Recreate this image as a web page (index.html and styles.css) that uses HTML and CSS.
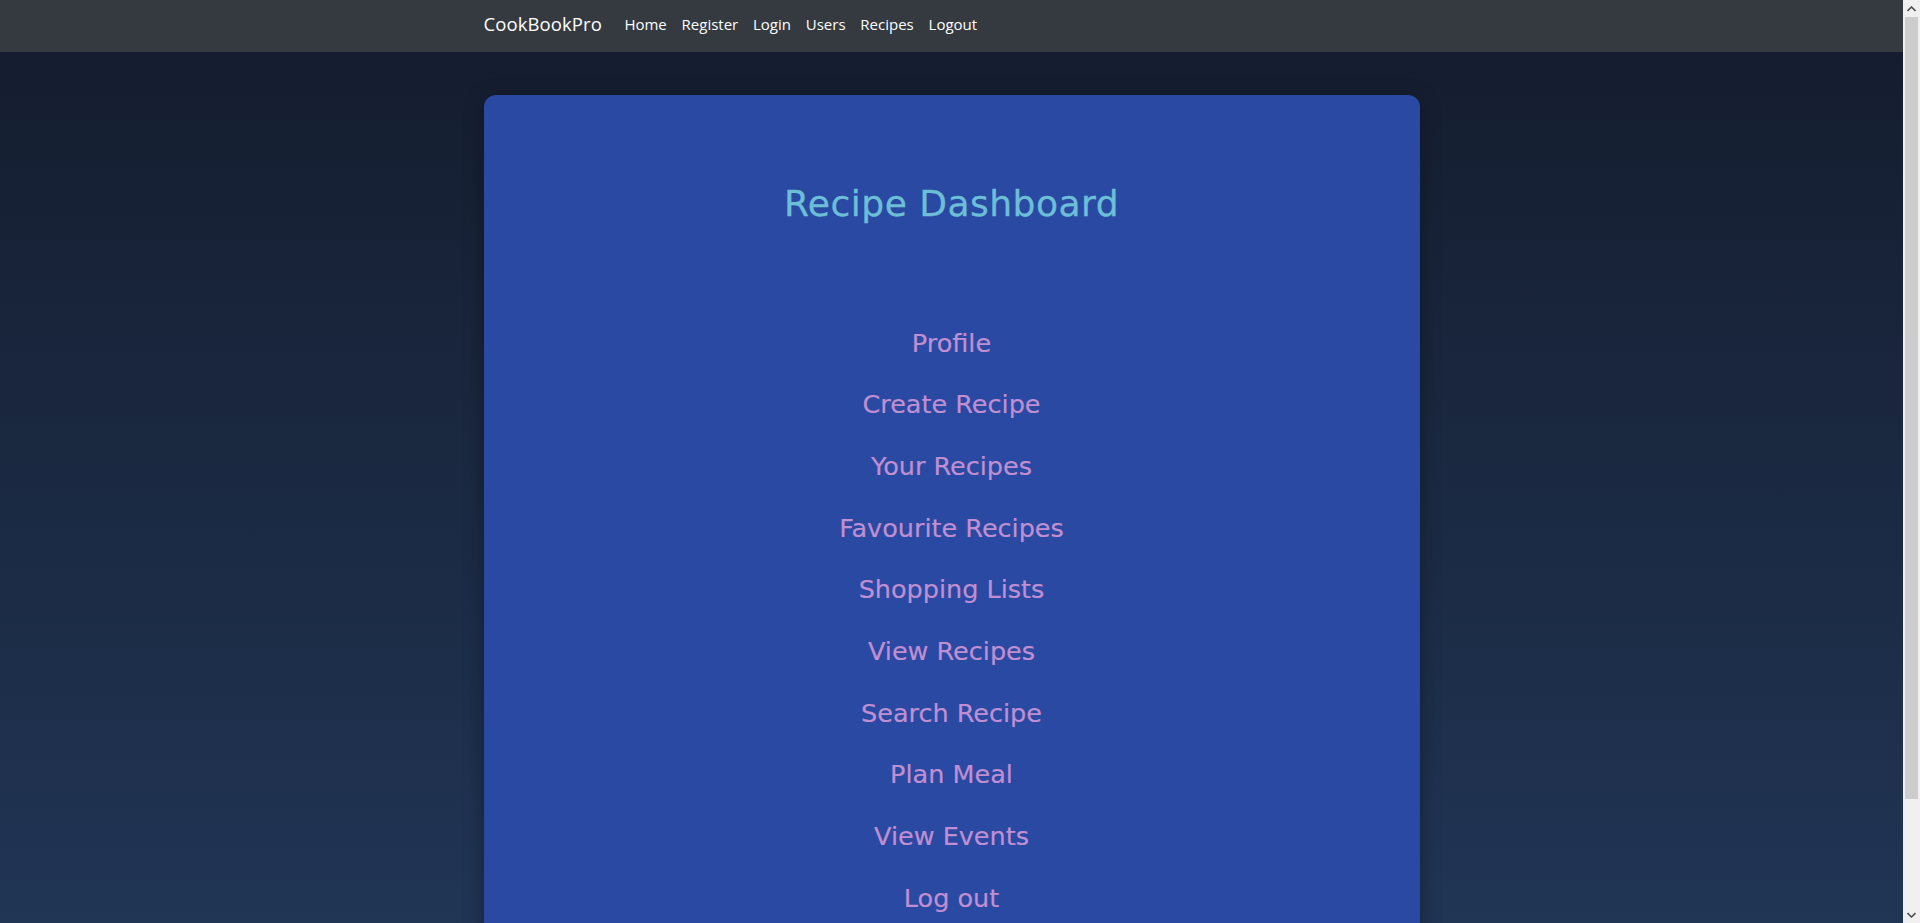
FILE: index.html
```html
<!DOCTYPE html>
<html lang="en">
<head>
<meta charset="utf-8">
<title>CookBookPro</title>
<link rel="stylesheet" href="styles.css">
</head>
<body>
<nav class="navbar">
  <div class="container nav-inner">
    <a class="brand" href="#">CookBookPro</a>
    <ul class="nav-links">
      <li><a href="#">Home</a></li>
      <li><a href="#">Register</a></li>
      <li><a href="#">Login</a></li>
      <li><a href="#">Users</a></li>
      <li><a href="#">Recipes</a></li>
      <li><a href="#">Logout</a></li>
    </ul>
  </div>
</nav>
<main class="container">
  <section class="card">
    <h1 class="title">Recipe Dashboard</h1>
    <ul class="menu">
      <li><a href="#">Profile</a></li>
      <li><a href="#">Create Recipe</a></li>
      <li><a href="#">Your Recipes</a></li>
      <li><a href="#">Favourite Recipes</a></li>
      <li><a href="#">Shopping Lists</a></li>
      <li><a href="#">View Recipes</a></li>
      <li><a href="#">Search Recipe</a></li>
      <li><a href="#">Plan Meal</a></li>
      <li><a href="#">View Events</a></li>
      <li><a href="#">Log out</a></li>
    </ul>
  </section>
</main>
<div class="scrollbar" aria-hidden="true">
  <div class="sb-arrow sb-up">
    <svg width="9" height="6" viewBox="0 0 9 6"><path d="M0.5 5 L4.5 1 L8.5 5" fill="none" stroke="#505050" stroke-width="1.6"/></svg>
  </div>
  <div class="sb-track"><div class="sb-thumb"></div></div>
  <div class="sb-arrow sb-down">
    <svg width="9" height="6" viewBox="0 0 9 6"><path d="M0.5 1 L4.5 5 L8.5 1" fill="none" stroke="#505050" stroke-width="1.6"/></svg>
  </div>
</div>
</body>
</html>
```
FILE: styles.css
```css
* { box-sizing: border-box; }
html {
  background: linear-gradient(to bottom, #141c2d 0%, #22385a 100%);
  min-height: 100%;
}
body {
  margin: 0 17px 0 0;
  font-family: "Open Sans", "Noto Sans", sans-serif;
  color: #fff;
}
a { text-decoration: none; }
ul { list-style: none; margin: 0; padding: 0; }

.container {
  width: 936px;
  margin: 0 auto;
}

.navbar {
  background: #343a40;
  height: 52px;
}
.nav-inner {
  display: flex;
  align-items: center;
  height: 100%;
  padding-bottom: 5px;
}
.brand {
  color: #fff;
  font-size: 18.5px;
  margin-right: 15px;
  letter-spacing: 0.1px;
}
.nav-links {
  display: flex;
  padding-top: 1px;
}
.nav-links a {
  color: #fff;
  font-size: 15px;
  padding: 0 7.4px;
  display: block;
}

.card {
  margin-top: 43px;
  margin-bottom: 40px;
  background: #2a49a3;
  border-radius: 12px;
  box-shadow: 0 4px 20px rgba(0, 0, 0, 0.35);
  padding: 87px 40px 80px;
  text-align: center;
}
.title {
  margin: 0;
  font-family: "DejaVu Sans", "Open Sans", sans-serif;
  font-size: 36px;
  font-weight: normal;
  letter-spacing: 0.5px;
  color: #6cbfd6;
  line-height: 1.2;
  -webkit-text-stroke: 0.3px #6cbfd6;
}
.menu {
  margin-top: 86.5px;
  display: flex;
  flex-direction: column;
  align-items: center;
}
.menu li {
  height: 61.7px;
  display: flex;
  align-items: center;
}
.menu a {
  font-family: "DejaVu Sans", "Open Sans", sans-serif;
  color: #c08fd1;
  font-size: 25.5px;
  -webkit-text-stroke: 0.2px #c08fd1;
}

.scrollbar {
  position: fixed;
  top: 0;
  right: 0;
  width: 17px;
  height: 100vh;
  background: #f0f0f0;
  display: flex;
  flex-direction: column;
}
.sb-arrow {
  height: 17px;
  display: flex;
  align-items: center;
  justify-content: center;
}
.sb-track {
  flex: 1;
  padding: 0 2px;
}
.sb-thumb {
  height: 88%;
  background: #cdcdcd;
}
```
